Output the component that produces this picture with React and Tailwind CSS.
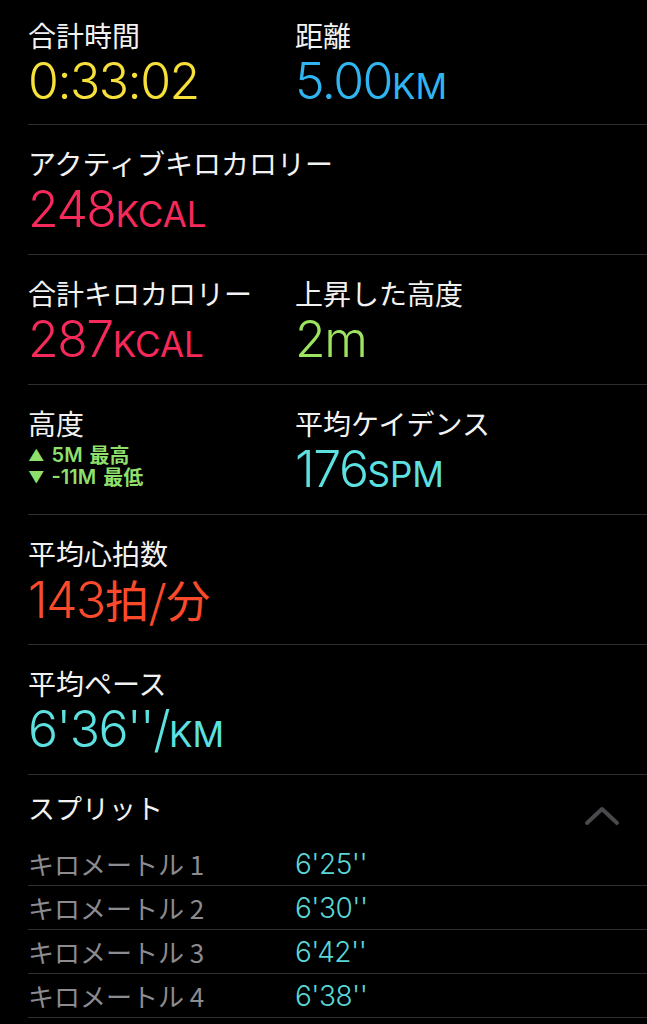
import React from 'react';

const jp = { fontFamily: '"Noto Sans CJK JP", "Noto Sans", sans-serif' };
const num = { fontFamily: 'Inter, "Noto Sans CJK JP", sans-serif' };

const Label = ({ children }) => (
  <div className="text-[28px] leading-[30px] text-[#f2f2f2]" style={jp}>
    {children}
  </div>
);

const Value = ({ color, children }) => (
  <div className={`mt-[4px] text-[50px] leading-[54px] font-[350] tracking-[-1.5px] ${color}`} style={num}>
    {children}
  </div>
);

const Unit = ({ children }) => <span className="text-[35px] font-normal tracking-[0px]">{children}</span>;

const splits = [
  ['1', "6'25''"],
  ['2', "6'30''"],
  ['3', "6'42''"],
  ['4', "6'38''"],
];

const App = () => {
  return (
    <div className="min-h-screen w-[647px] bg-black overflow-hidden">
      <div className="ml-[28px]">
        <section className="h-[125px] pt-[20px] border-b border-[#2e2e30] grid grid-cols-[267px_1fr]">
          <div>
            <Label>合計時間</Label>
            <Value color="text-[#f7e03a]">0:33:02</Value>
          </div>
          <div>
            <Label>距離</Label>
            <Value color="text-[#30b5f0]">
              5.00<Unit>KM</Unit>
            </Value>
          </div>
        </section>

        <section className="h-[130px] pt-[23px] border-b border-[#2e2e30]">
          <Label>アクティブキロカロリー</Label>
          <Value color="text-[#f6295b]">
            248<Unit>KCAL</Unit>
          </Value>
        </section>

        <section className="h-[130px] pt-[23px] border-b border-[#2e2e30] grid grid-cols-[267px_1fr]">
          <div>
            <Label>合計キロカロリー</Label>
            <Value color="text-[#f6295b]">
              287<Unit>KCAL</Unit>
            </Value>
          </div>
          <div>
            <Label>上昇した高度</Label>
            <Value color="text-[#9ce35f]">2m</Value>
          </div>
        </section>

        <section className="h-[130px] pt-[23px] border-b border-[#2e2e30] grid grid-cols-[267px_1fr]">
          <div>
            <Label>高度</Label>
            <div className="mt-[6px] text-[20px] font-semibold text-[#8fdf6c]" style={num}>
              <div className="h-[22px] flex items-center gap-[7px]">
                <span className="text-[16px] leading-[20px]">▲</span>
                <span className="leading-[20px]">5M</span>
                <span className="text-[20px] leading-[20px]" style={jp}>最高</span>
              </div>
              <div className="h-[22px] flex items-center gap-[7px]">
                <span className="text-[16px] leading-[20px]">▼</span>
                <span className="leading-[20px]">-11M</span>
                <span className="text-[20px] leading-[20px]" style={jp}>最低</span>
              </div>
            </div>
          </div>
          <div>
            <Label>平均ケイデンス</Label>
            <Value color="text-[#5ce0e0]">
              176<Unit>SPM</Unit>
            </Value>
          </div>
        </section>

        <section className="h-[130px] pt-[23px] border-b border-[#2e2e30]">
          <Label>平均心拍数</Label>
          <Value color="text-[#fa4a2b]">
            143<span className="text-[44px] font-normal tracking-[0px]" style={jp}>拍/分</span>
          </Value>
        </section>

        <section className="h-[130px] pt-[23px] border-b border-[#2e2e30]">
          <Label>平均ペース</Label>
          <Value color="text-[#5ce0e0]">
            6'36''/<Unit>KM</Unit>
          </Value>
        </section>

        <section>
          <div className="h-[67px] flex items-start justify-between pt-[16px] pr-[27px]">
            <div className="text-[27px] leading-[34px] text-[#f2f2f2]" style={jp}>
              スプリット
            </div>
            <svg width="36" height="20" viewBox="0 0 36 20" className="mt-[15px]">
              <path d="M3 17 L18 3 L33 17" fill="none" stroke="#4a4a4c" strokeWidth="4" strokeLinecap="round" strokeLinejoin="round" />
            </svg>
          </div>
          {splits.map(([k, v]) => (
            <div key={k} className="h-[44px] border-b border-[#2e2e30] grid grid-cols-[267px_1fr] items-center">
              <div className="text-[26px] leading-[30px] text-[#8c8c90]" style={jp}>
                キロメートル {k}
              </div>
              <div className="text-[28px] leading-[30px] font-[350] tracking-[-0.5px] text-[#5ad6d6]" style={num}>
                {v}
              </div>
            </div>
          ))}
        </section>
      </div>
    </div>
  );
};

export default App;
